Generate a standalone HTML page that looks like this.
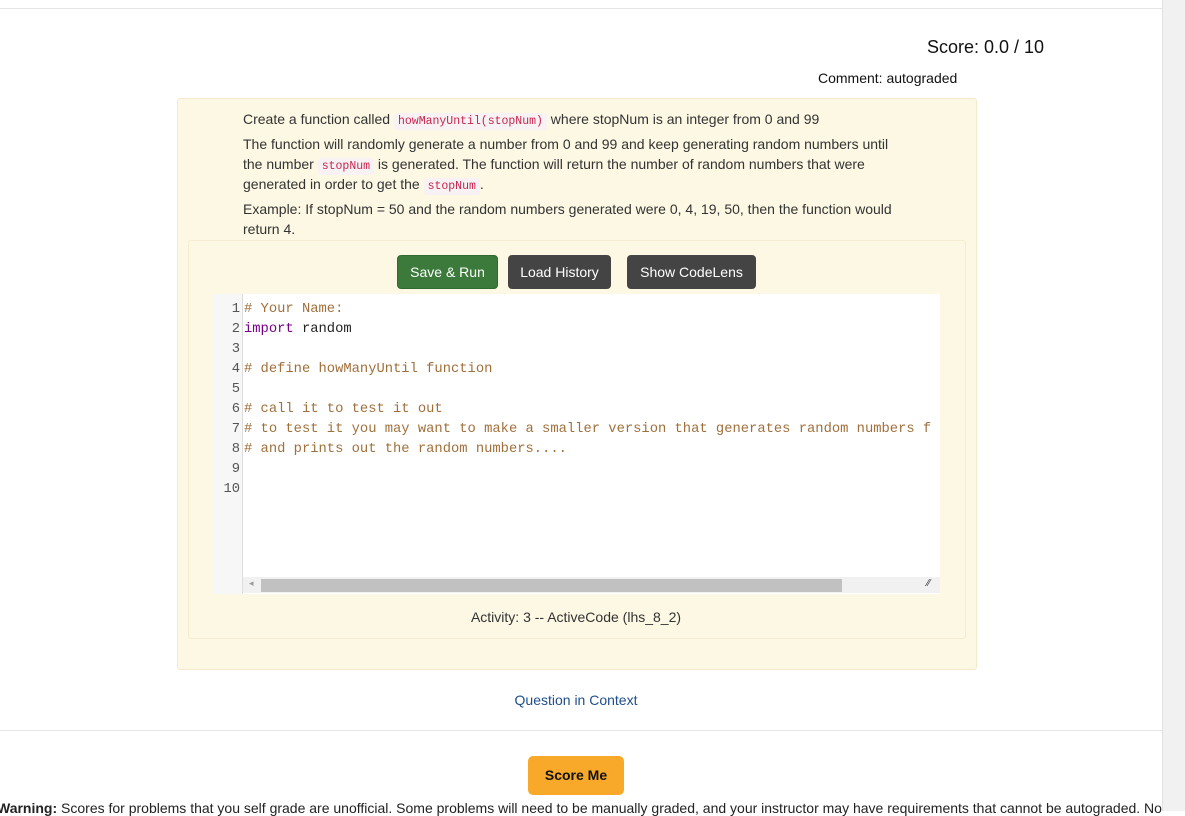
<!DOCTYPE html>
<html><head><meta charset="utf-8"><style>
body{margin:0;width:1185px;height:811px;overflow:hidden;background:#fff;font-family:"Liberation Sans",Arial,sans-serif;font-size:14px;color:#333;position:relative}
.a{position:absolute}
code{font-family:"Liberation Mono",monospace;font-size:11.5px;line-height:1;color:#c7254e;background:#f9f2f4;padding:2px 4px;border-radius:3px}
.btn{position:absolute;top:255px;height:34px;line-height:34px;color:#fff;border-radius:4px;text-align:center;font-size:14px;box-sizing:border-box}
.ln{position:absolute;left:214px;width:26px;text-align:right;color:#555;font-family:"Liberation Mono",monospace;font-size:13.8px}
.cl{position:absolute;left:244px;font-family:"Liberation Mono",monospace;font-size:13.8px;color:#a0703c;white-space:pre}
</style></head><body>
<div class="a" style="left:0;top:8px;width:1162px;height:1px;background:#e5e5e5"></div>
<div class="a" style="left:1162px;top:0;width:23px;height:811px;background:#f1f1f1;border-left:1px solid #e0e0e0"></div>
<div class="a" style="left:927px;top:37px;font-size:18px;color:#111">Score: 0.0 / 10</div>
<div class="a" style="left:818px;top:70px;color:#111">Comment: autograded</div>
<div class="a" style="left:177px;top:98px;width:798px;height:570px;background:#fcf8e3;border:1px solid #f3eccc;border-radius:3px"></div>
<div class="a" style="left:243px;top:109px;line-height:20px;width:660px">Create a function called <code>howManyUntil(stopNum)</code> where stopNum is an integer from 0 and 99</div>
<div class="a" style="left:243px;top:134px;line-height:20px;width:660px">The function will randomly generate a number from 0 and 99 and keep generating random numbers until the number <code>stopNum</code> is generated. The function will return the number of random numbers that were generated in order to get the <code>stopNum</code>.</div>
<div class="a" style="left:243px;top:199px;line-height:20px;width:660px">Example: If stopNum = 50 and the random numbers generated were 0, 4, 19, 50, then the function would return 4.</div>
<div class="a" style="left:188px;top:240px;width:776px;height:397px;border:1px solid #f3ecd0;border-radius:3px"></div>
<div class="btn" style="left:397px;width:101px;background:#3c7a3c;border:1px solid #2f6a2f;line-height:32px">Save &amp; Run</div>
<div class="btn" style="left:508px;width:103px;background:#444">Load History</div>
<div class="btn" style="left:627px;width:129px;background:#444">Show CodeLens</div>
<div class="a" style="left:214px;top:294px;width:726px;height:300px;background:#fff"></div>
<div class="a" style="left:214px;top:294px;width:28px;height:300px;background:#f7f7f7;border-right:1px solid #ddd"></div>
<div class="ln" style="top:302px">1</div><div class="ln" style="top:322px">2</div><div class="ln" style="top:342px">3</div><div class="ln" style="top:362px">4</div><div class="ln" style="top:382px">5</div><div class="ln" style="top:402px">6</div><div class="ln" style="top:422px">7</div><div class="ln" style="top:442px">8</div><div class="ln" style="top:462px">9</div><div class="ln" style="top:482px">10</div>
<div class="cl" style="top:302px"># Your Name:</div>
<div class="cl" style="top:322px;color:#222"><span style="color:#708">import</span> random</div>
<div class="cl" style="top:362px"># define howManyUntil function</div>
<div class="cl" style="top:402px"># call it to test it out</div>
<div class="cl" style="top:422px;width:696px;overflow:hidden"># to test it you may want to make a smaller version that generates random numbers f</div>
<div class="cl" style="top:442px"># and prints out the random numbers....</div>
<div class="a" style="left:243px;top:577px;width:697px;height:16px;background:#f1f1f1"></div>
<div class="a" style="left:261px;top:579px;width:581px;height:13px;background:#c1c1c1"></div>
<div class="a" style="left:249px;top:578px;font-size:9px;color:#999">◂</div>
<div class="a" style="left:927px;top:578px;font-size:10px;color:#333">⁄⁄</div>
<div class="a" style="left:0;top:609px;width:1152px;text-align:center">Activity: 3 -- ActiveCode (lhs_8_2)</div>
<div class="a" style="left:0;top:692px;width:1152px;text-align:center;color:#1f4e8c">Question in Context</div>
<div class="a" style="left:0;top:730px;width:1162px;height:1px;background:#e5e5e5"></div>
<div class="a" style="left:528px;top:756px;width:96px;height:39px;line-height:39px;background:#f8a929;border-radius:5px;text-align:center;font-weight:bold;color:#111">Score Me</div>
<div class="a" style="left:-3px;top:800px;white-space:nowrap;color:#222"><b>Warning:</b> Scores for problems that you self grade are unofficial. Some problems will need to be manually graded, and your instructor may have requirements that cannot be autograded. No</div>
</body></html>
